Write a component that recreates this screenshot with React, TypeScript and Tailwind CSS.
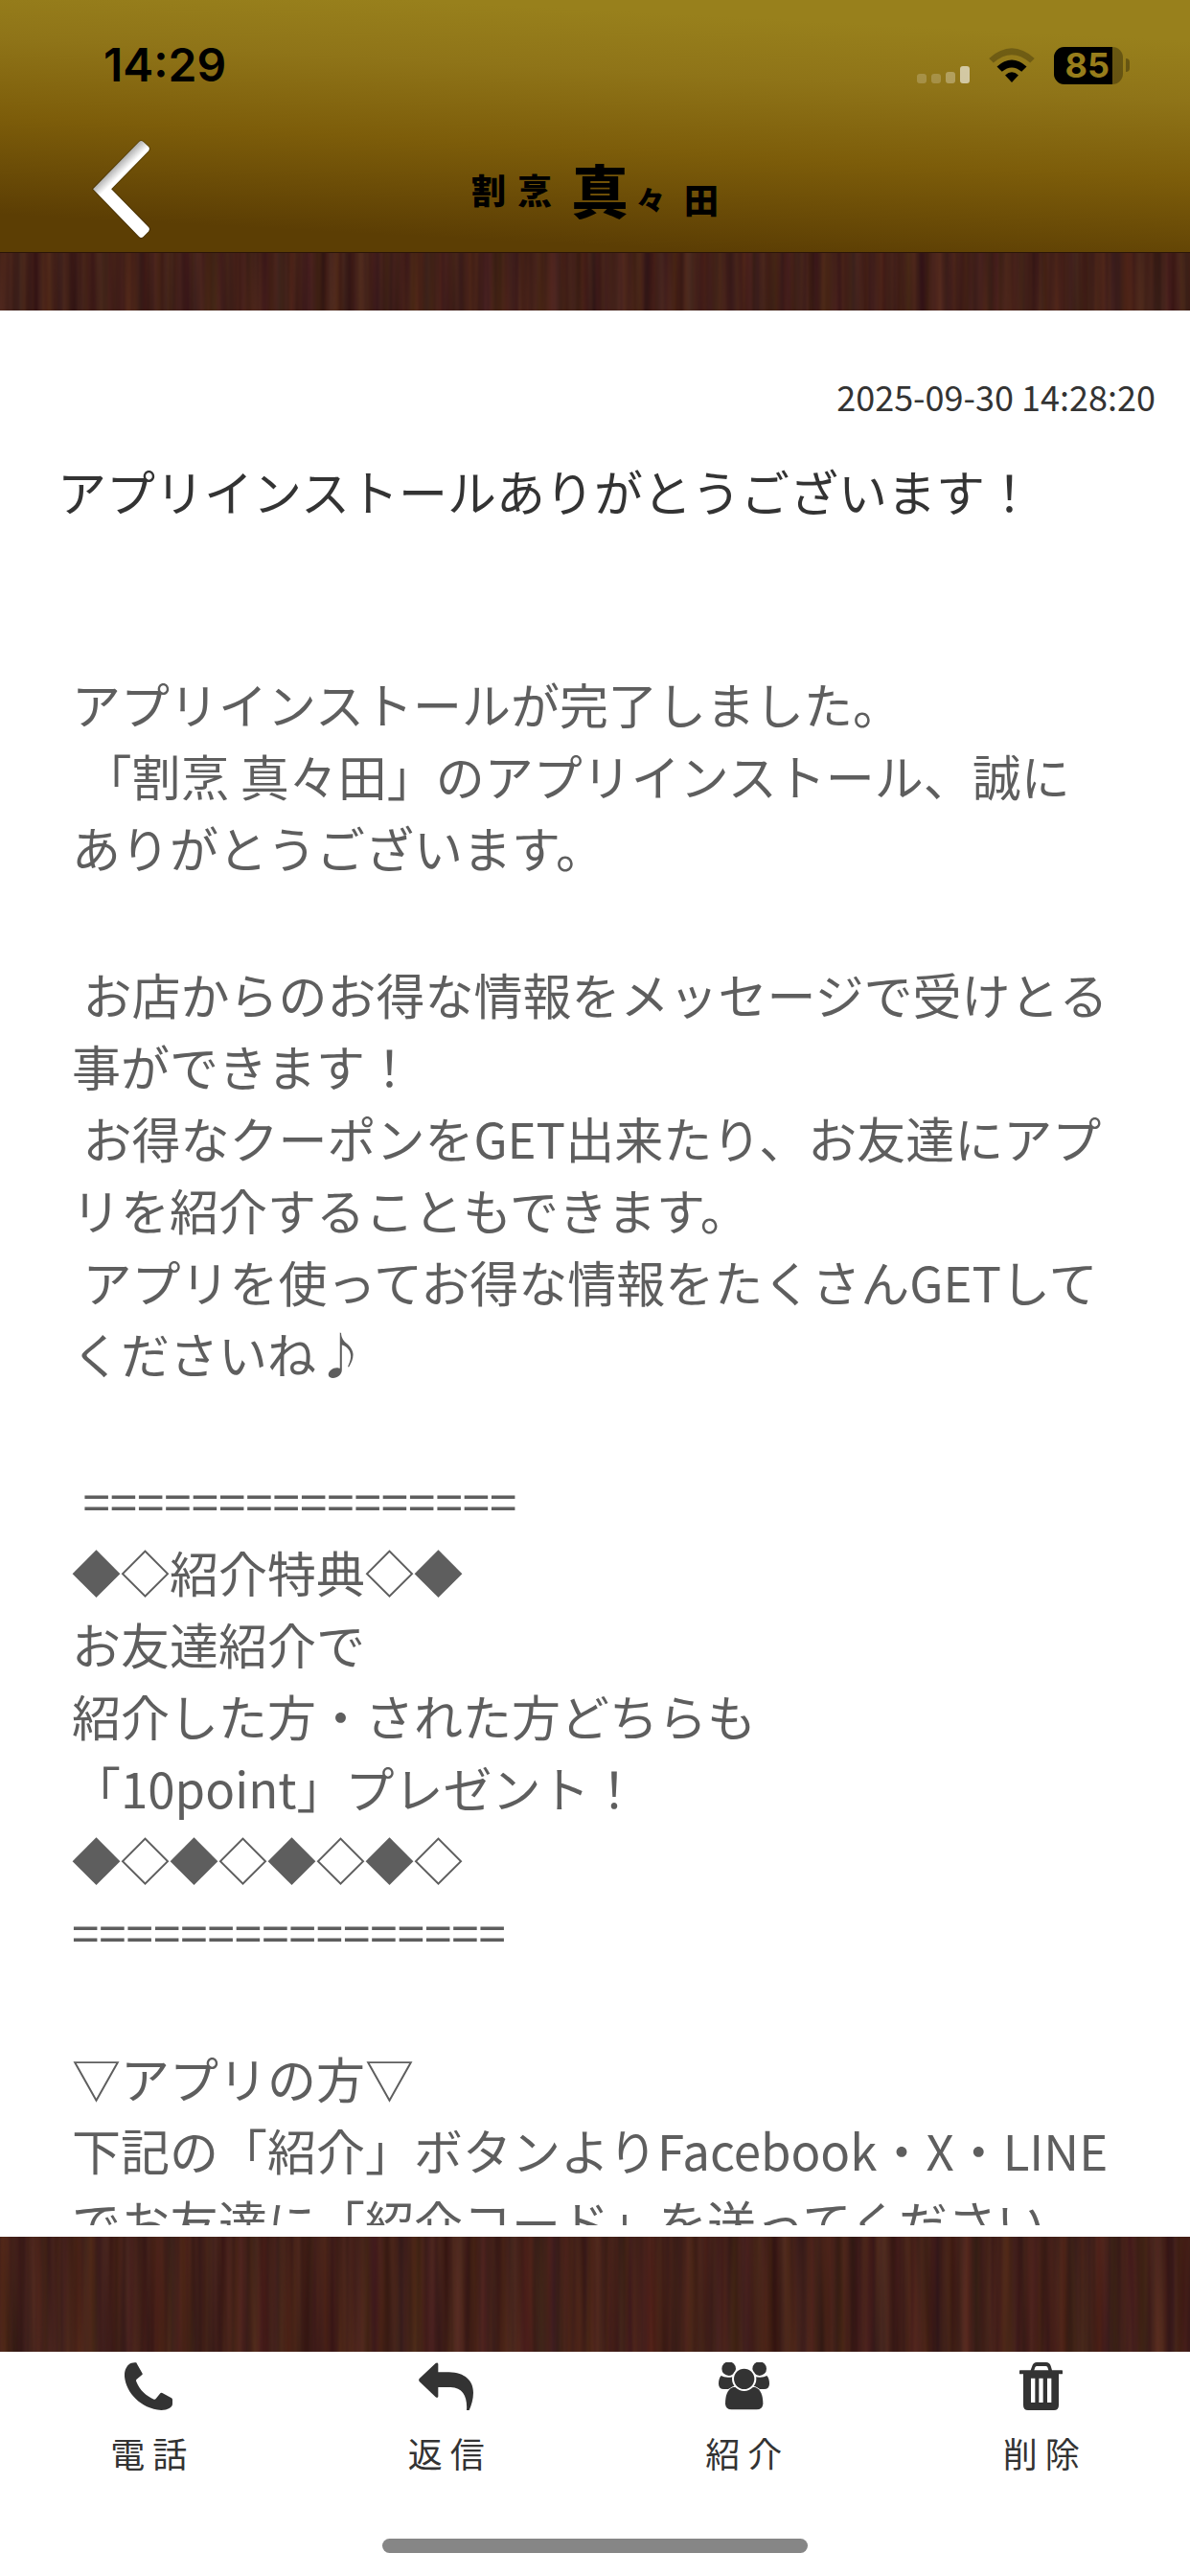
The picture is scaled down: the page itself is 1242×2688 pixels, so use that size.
import { ReactNode } from 'react';

type Tab = {
  label: string;
  icon: ReactNode;
};

const MESSAGE_BLOCKS = [
  `アプリインストールが完了しました。
 「割烹 真々田」のアプリインストール、誠にありがとうございます。`,
  ` お店からのお得な情報をメッセージで受けとる事ができます！
 お得なクーポンをGET出来たり、お友達にアプリを紹介することもできます。
 アプリを使ってお得な情報をたくさんGETしてくださいね♪`,
  ` ================
◆◇紹介特典◇◆
お友達紹介で
紹介した方・された方どちらも
「10point」プレゼント！
◆◇◆◇◆◇◆◇
================`,
  `▽アプリの方▽
下記の「紹介」ボタンよりFacebook・X・LINEでお友達に「紹介コード」を送ってください。`,
];

const PhoneIcon = () => (
  <svg viewBox="0 0 150 150" className="h-[50px]" fill="currentColor" aria-hidden="true">
    <path d="M22 2Q30 0 36 1Q38 2 39 5L56 35Q57 38 54 40L37 54Q35 57 37 61C48 88 68 106 92 116Q96 117 98 114L112 97Q115 94 118 96L147 112Q150 114 150 118V130C150 142 135 150 115 150C50 145 5 95 0 45V35C2 18 10 6 22 2Z" />
  </svg>
);

const ReplyIcon = () => (
  <svg viewBox="0 0 171 150" className="h-[50px]" fill="currentColor" aria-hidden="true">
    <path d="M2 51L53 3Q59 -1 61 5V31H95C145 32 171 58 171 95C171 115 165 135 158 150H150C153 110 140 79 100 78H61V107Q59 113 53 109L2 60Q-1 55 2 51Z" />
  </svg>
);

const PeopleIcon = () => (
  <svg viewBox="0 0 159 150" className="h-[50px]" fill="currentColor" aria-hidden="true">
    <path d="M8 42Q20 50 44 46L50 74L30 84H16Q1 84 0 68Q0 50 8 42Z" />
    <path d="M151 42Q139 50 115 46L109 74L129 84H143Q158 84 159 68Q159 50 151 42Z" />
    <circle cx="32" cy="20" r="22" />
    <circle cx="128" cy="20" r="22" />
    <path
      d="M46 78C28 84 21 104 21 130Q22 148 41 148H119Q138 148 139 130C139 104 132 84 114 78Z"
      stroke="#fff"
      strokeWidth="4"
      paintOrder="stroke"
    />
    <circle cx="80" cy="52" r="35" stroke="#fff" strokeWidth="6" />
  </svg>
);

const TrashIcon = () => (
  <svg viewBox="0 0 135 150" className="h-[50px]" fill="currentColor" aria-hidden="true">
    <path
      fillRule="evenodd"
      d="M35 25L40 11Q44 0 54 0H84Q94 0 98 11L102 25H133Q135 25 135 27V35Q135 37 133 37H123V134Q123 150 108 150H27Q12 150 12 134V37H2Q0 37 0 35V27Q0 25 2 25ZM46 25H91L88 16Q86 12 82 12H55Q51 12 49 16ZM36 50V126H49V50ZM61 50V126H74V50ZM87 50V126H100V50Z"
    />
  </svg>
);

const TABS: Tab[] = [
  { label: '電 話', icon: <PhoneIcon /> },
  { label: '返 信', icon: <ReplyIcon /> },
  { label: '紹 介', icon: <PeopleIcon /> },
  { label: '削 除', icon: <TrashIcon /> },
];

// Dark walnut grain, used behind the message panel
const WoodStrip = ({ id, seed, className }: { id: string; seed: number; className: string }) => (
  <div className={className}>
    <svg className="block h-full w-full bg-[#42201a]" aria-hidden="true">
      <filter id={id} x="0" y="0" width="100%" height="100%" colorInterpolationFilters="sRGB">
        <feTurbulence type="fractalNoise" baseFrequency="0.07 0.002" numOctaves="3" seed={seed} />
        <feColorMatrix values="0.22 0 0 0 0.15  0.12 0.07 0 0 0.03  0.04 0 0.08 0 0.035  0 0 0 0 1" />
      </filter>
      <rect width="100%" height="100%" filter={`url(#${id})`} />
    </svg>
  </div>
);

const StatusBar = () => (
  <div className="flex h-[136px] items-center justify-between pl-[108px] pr-[63px] font-['Inter',sans-serif] text-black">
    <span className="text-5xl font-semibold">14:29</span>
    <div className="flex items-center gap-5">
      <div className="flex h-[37px] items-end gap-[5px]">
        <span className="h-[10px] w-[10px] rounded-[3px] bg-white/20" />
        <span className="h-[10px] w-[10px] rounded-[3px] bg-white/20" />
        <span className="h-[12px] w-[10px] rounded-[3px] bg-white/30" />
        <span className="h-[18px] w-[10px] rounded-[3px] bg-white/60" />
      </div>
      <svg viewBox="395 147 144 109" className="h-9 w-12" aria-hidden="true">
        <path d="M395 180Q467 116 539 180L525 194Q467 144 409 194Z" fillOpacity="0.25" />
        <path d="M420 206Q467 164 514 206L498 222Q467 196 436 222Z" />
        <path d="M446 233Q467 214 488 233L467 256Z" />
      </svg>
      <div className="flex items-center gap-[3px]">
        <div className="flex h-[39px] w-[72px] items-center rounded-[11px] bg-black/30">
          <span className="flex h-full w-[61px] items-center justify-end rounded-l-[11px] bg-black pr-[3px] text-4xl leading-none font-bold text-[#977d1b]">
            85
          </span>
        </div>
        <span className="h-[14px] w-1 rounded-r-full bg-black/30" />
      </div>
    </div>
  </div>
);

const Logo = () => (
  <h1 className="flex items-center justify-center font-black text-black">
    <span className="text-4xl">割</span>
    <span className="ml-3 text-4xl">烹</span>
    <span className="ml-5 text-6xl">真</span>
    <span className="ml-2 mt-5 text-3xl">々</span>
    <span className="ml-5 mt-5 text-4xl">田</span>
  </h1>
);

const App = () => {
  return (
    <div className="flex h-screen flex-col bg-white font-['Noto_Sans_CJK_JP',sans-serif] text-[#333333]">
      <header className="shrink-0 border-b border-[#2a1508] bg-[linear-gradient(183deg,#98801c_13%,#8f7418_32%,#7d5d0a_57%,#5c3e04_88%)] pb-[5px]">
        <StatusBar />
        <div className="grid h-[122px] grid-cols-[1fr_auto_1fr] items-center">
          <button type="button" aria-label="戻る" className="w-fit pl-[94px]">
            <svg viewBox="281 431 194 320" className="h-[107px] w-[65px]" aria-hidden="true">
              <defs>
                <linearGradient id="bevel" gradientUnits="userSpaceOnUse" x1="365" y1="515" x2="386" y2="536">
                  <stop offset="0" stopColor="#b5b5b5" />
                  <stop offset="1" stopColor="#ffffff" />
                </linearGradient>
              </defs>
              <path
                d="M290 590L434 443Q440 437 447 443L464 459Q469 465 464 471L347 590L464 710Q469 716 464 722L447 739Q440 745 434 739Z"
                fill="url(#bevel)"
                stroke="#000"
                strokeOpacity="0.25"
                strokeWidth="5"
                paintOrder="stroke"
              />
            </svg>
          </button>
          <Logo />
        </div>
      </header>

      <WoodStrip id="grain-top" seed={4} className="h-[60px] shrink-0" />

      <main className="flex min-h-0 flex-1 flex-col bg-white pb-3 pt-[63px]">
        <time className="pr-9 text-right text-4xl leading-[52px]">2025-09-30 14:28:20</time>
        <h2 className="mt-9 px-[60px] text-[51px] leading-[75px]">
          アプリインストールありがとうございます！
        </h2>
        <div className="mt-[147px] flex min-h-0 flex-1 flex-col gap-[78px] overflow-y-auto px-[75px] text-[51px] leading-[75px] text-[#5e5e5e] [scrollbar-width:none]">
          {MESSAGE_BLOCKS.map((block, i) => (
            <p key={i} className="shrink-0 whitespace-pre-wrap">
              {block}
            </p>
          ))}
        </div>
      </main>

      <WoodStrip id="grain-bottom" seed={11} className="h-[120px] shrink-0" />

      <footer className="shrink-0 bg-white">
        <nav className="grid h-[195px] grid-cols-4 items-start pt-[11px]">
          {TABS.map(tab => (
            <button key={tab.label} type="button" className="flex flex-col items-center gap-[18px]">
              {tab.icon}
              <span className="text-4xl leading-[52px]">{tab.label}</span>
            </button>
          ))}
        </nav>
        <div className="flex h-[39px] justify-center">
          <div className="h-[15px] w-[444px] rounded-full bg-[#868686]" />
        </div>
      </footer>
    </div>
  );
};

export default App;
